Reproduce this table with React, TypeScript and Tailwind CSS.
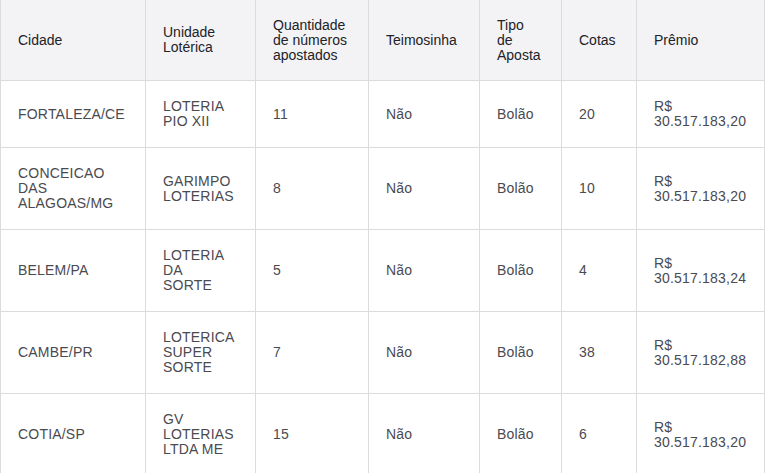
import React from "react";

const headers = [
  "Cidade",
  "Unidade\nLotérica",
  "Quantidade\nde números\napostados",
  "Teimosinha",
  "Tipo\nde\nAposta",
  "Cotas",
  "Prêmio",
];

const rows: string[][] = [
  ["FORTALEZA/CE", "LOTERIA\nPIO XII", "11", "Não", "Bolão", "20", "R$\n30.517.183,20"],
  ["CONCEICAO\nDAS\nALAGOAS/MG", "GARIMPO\nLOTERIAS", "8", "Não", "Bolão", "10", "R$\n30.517.183,20"],
  ["BELEM/PA", "LOTERIA\nDA\nSORTE", "5", "Não", "Bolão", "4", "R$\n30.517.183,24"],
  ["CAMBE/PR", "LOTERICA\nSUPER\nSORTE", "7", "Não", "Bolão", "38", "R$\n30.517.182,88"],
  ["COTIA/SP", "GV\nLOTERIAS\nLTDA ME", "15", "Não", "Bolão", "6", "R$\n30.517.183,20"],
];

export default function App() {
  return (
    <div
      className="w-[766px] h-[473px] overflow-hidden bg-white"
      style={{ fontFamily: '"Liberation Sans", Arial, sans-serif' }}
    >
      <div className="grid w-[765px] grid-cols-[145px_110px_113px_111px_82px_75px_128px] border-l border-[#dcdcdf]">
        {headers.map((h, i) => (
          <div
            key={"h" + i}
            className="flex items-center bg-[#f3f3f5] border-r border-b border-[#dcdcdf] pl-[17px] pr-2 py-[17.5px] text-[14px] leading-[15px] text-[#222228] whitespace-pre-line"
          >
            {h}
          </div>
        ))}
        {rows.map((r, ri) =>
          r.map((c, ci) => (
            <div
              key={ri + "-" + ci}
              className="flex items-center bg-white border-r border-b border-[#dcdcdf] pl-[17px] pr-2 py-[18px] text-[14px] leading-[15px] tracking-[0.2px] text-[#4a4a4f] whitespace-pre-line"
            >
              {c}
            </div>
          ))
        )}
      </div>
    </div>
  );
}
